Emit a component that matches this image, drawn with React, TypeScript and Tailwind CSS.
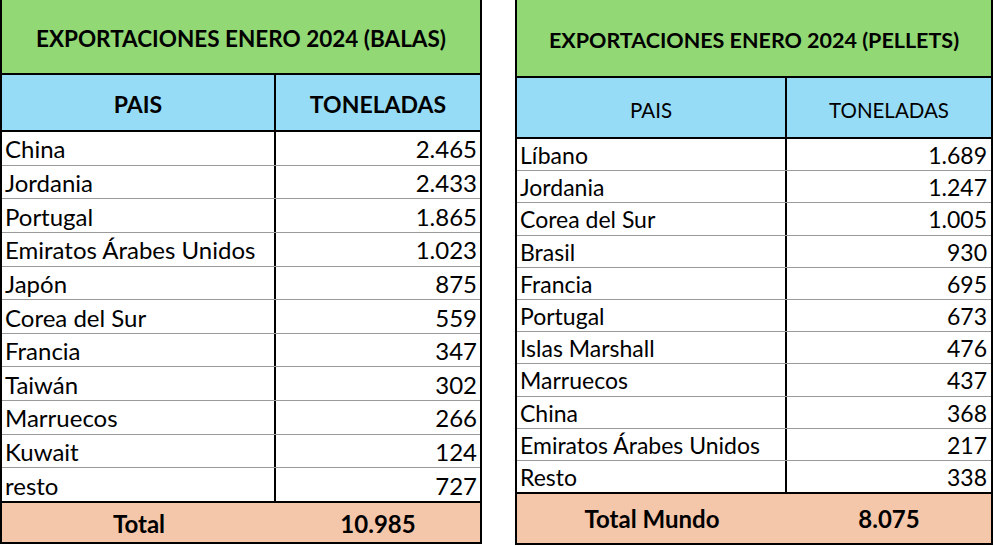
import React from "react";

type Row = [string, string];

const balas: Row[] = [
  ["China", "2.465"],
  ["Jordania", "2.433"],
  ["Portugal", "1.865"],
  ["Emiratos Árabes Unidos", "1.023"],
  ["Japón", "875"],
  ["Corea del Sur", "559"],
  ["Francia", "347"],
  ["Taiwán", "302"],
  ["Marruecos", "266"],
  ["Kuwait", "124"],
  ["resto", "727"],
];

const pellets: Row[] = [
  ["Líbano", "1.689"],
  ["Jordania", "1.247"],
  ["Corea del Sur", "1.005"],
  ["Brasil", "930"],
  ["Francia", "695"],
  ["Portugal", "673"],
  ["Islas Marshall", "476"],
  ["Marruecos", "437"],
  ["China", "368"],
  ["Emiratos Árabes Unidos", "217"],
  ["Resto", "338"],
];

const font = { fontFamily: "Lato, 'Open Sans', sans-serif" };

export default function App() {
  return (
    <div className="w-[994px] h-[546px] bg-white flex text-black leading-none" style={font}>
      {/* Left table */}
      <div className="w-[482px] h-[544px] border-x-2 border-b-2 border-black flex flex-col">
        <div className="h-[75px] shrink-0 bg-[#92d975] border-b-2 border-black flex items-center justify-center pt-[5px]">
          <span className="text-[22.5px] font-bold">EXPORTACIONES ENERO 2024 (BALAS)</span>
        </div>
        <div className="h-[57px] shrink-0 bg-[#97dcf7] border-b-2 border-black grid grid-cols-[274px_1fr]">
          <div className="border-r-2 border-black flex items-center justify-center pt-[4px] text-[23px] font-bold">PAIS</div>
          <div className="flex items-center justify-center pt-[4px] text-[23px] font-bold">TONELADAS</div>
        </div>
        <div className="h-[369px] shrink-0 flex flex-col">
          {balas.map(([p, t], i) => (
            <div
              key={p}
              className={`flex-1 min-h-0 grid grid-cols-[274px_1fr] ${i < balas.length - 1 ? "border-b border-[#9a9a9a]" : ""}`}
            >
              <div className="border-r-2 border-black flex items-center pl-[3px] pt-[2px] text-[24px] whitespace-nowrap">{p}</div>
              <div className="flex items-center justify-end pr-[3px] pt-[2px] text-[24px]">{t}</div>
            </div>
          ))}
        </div>
        <div className="h-[41px] shrink-0 border-t-2 border-black bg-[#f4c6aa] grid grid-cols-[274px_1fr]">
          <div className="flex items-center justify-center pt-[2px] text-[24px] font-bold">Total</div>
          <div className="flex items-center justify-center pt-[2px] text-[24px] font-bold">10.985</div>
        </div>
      </div>

      {/* Right table */}
      <div className="ml-[33px] w-[478px] h-[545px] border-x-2 border-b-2 border-black flex flex-col">
        <div className="h-[78px] shrink-0 bg-[#92d975] border-b-2 border-black flex items-center justify-center pt-[6px]">
          <span className="text-[21.5px] font-bold">EXPORTACIONES ENERO 2024 (PELLETS)</span>
        </div>
        <div className="h-[61px] shrink-0 bg-[#97dcf7] border-b-2 border-black grid grid-cols-[270px_1fr]">
          <div className="border-r-2 border-black flex items-center justify-center pt-[5px] text-[20.5px]">PAIS</div>
          <div className="flex items-center justify-center pt-[5px] text-[20.5px]">TONELADAS</div>
        </div>
        <div className="h-[353px] shrink-0 flex flex-col">
          {pellets.map(([p, t], i) => (
            <div
              key={p}
              className={`flex-1 min-h-0 grid grid-cols-[270px_1fr] ${i < pellets.length - 1 ? "border-b border-[#9a9a9a]" : ""}`}
            >
              <div className="border-r-2 border-black flex items-center pl-[3px] pt-[2px] text-[23px] whitespace-nowrap">{p}</div>
              <div className="flex items-center justify-end pr-[4px] pt-[2px] text-[23px]">{t}</div>
            </div>
          ))}
        </div>
        <div className="h-[51px] shrink-0 border-t-2 border-black bg-[#f4c6aa] grid grid-cols-[270px_1fr]">
          <div className="flex items-center justify-center pt-[1px] text-[24px] font-bold">Total Mundo</div>
          <div className="flex items-center justify-center pt-[1px] text-[24px] font-bold">8.075</div>
        </div>
      </div>
    </div>
  );
}
